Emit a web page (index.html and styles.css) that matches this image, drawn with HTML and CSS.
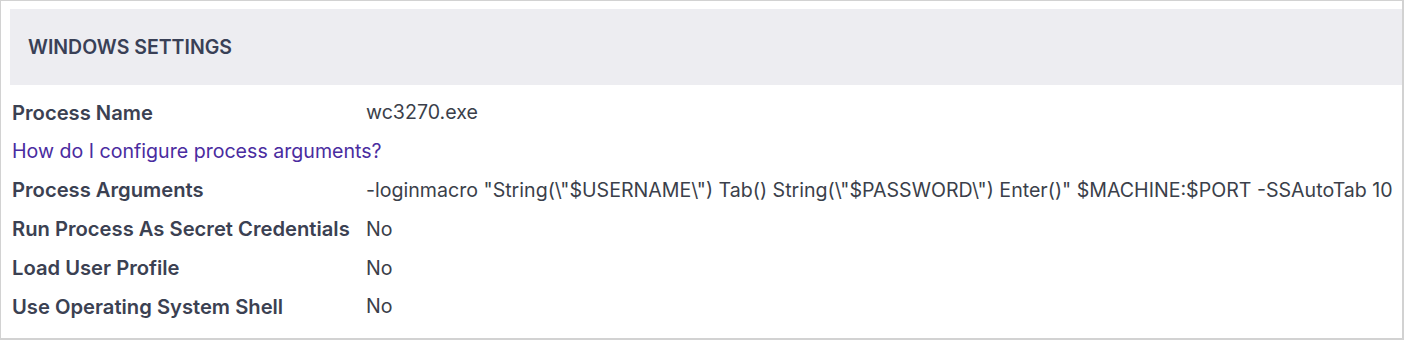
FILE: index.html
```html
<!DOCTYPE html>
<html>
<head>
<meta charset="utf-8">
<link rel="stylesheet" href="styles.css">
</head>
<body>
<div class="panel">
  <div class="header">WINDOWS SETTINGS</div>
  <div class="rows">
    <div class="row"><div class="label">Process Name</div><div class="value">wc3270.exe</div></div>
    <div class="row"><a class="link" href="#">How do I configure process arguments?</a></div>
    <div class="row"><div class="label">Process Arguments</div><div class="value">-loginmacro "String(\"$USERNAME\") Tab() String(\"$PASSWORD\") Enter()" $MACHINE:$PORT -SSAutoTab 10</div></div>
    <div class="row"><div class="label">Run Process As Secret Credentials</div><div class="value">No</div></div>
    <div class="row"><div class="label">Load User Profile</div><div class="value">No</div></div>
    <div class="row"><div class="label">Use Operating System Shell</div><div class="value">No</div></div>
  </div>
</div>
</body>
</html>
```
FILE: styles.css
```css
html, body {
  margin: 0;
  padding: 0;
  background: #ffffff;
}
.panel {
  box-sizing: border-box;
  width: 1404px;
  height: 340px;
  border: 1px solid #d2d2d2;
  border-width: 1px 2px 2px 1px;
  padding: 8px 0 0 9px;
  font-family: Inter, "Noto Sans", sans-serif;
  color: #3a4051;
}
.header {
  height: 76px;
  background: #ededf1;
  display: flex;
  align-items: center;
  padding-left: 18px;
  font-size: 19.5px;
  font-weight: 600;
  color: #394056;
}
.rows {
  padding-top: 8px;
  padding-left: 2px;
}
.row {
  height: 38.8px;
  display: flex;
  align-items: center;
  font-size: 19.6px;
}
.label {
  width: 354px;
  flex: none;
  font-size: 20.2px;
  font-weight: 600;
  color: #3b4152;
}
.value {
  color: #3b3f4a;
  white-space: nowrap;
}
.link {
  color: #4a2ca0;
  text-decoration: none;
}
```
